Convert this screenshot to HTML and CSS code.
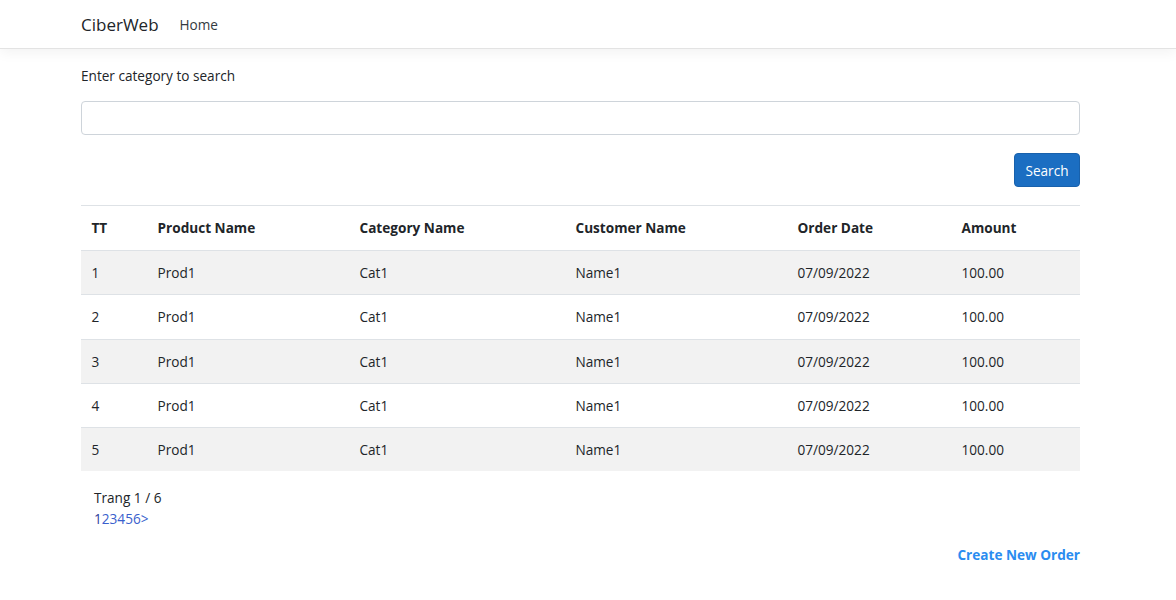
FILE: index.html
```html
<!DOCTYPE html>
<html lang="en">
<head>
<meta charset="utf-8">
<title>CiberWeb</title>
<link rel="stylesheet" href="styles.css">
</head>
<body>
<header class="navbar">
  <div class="container nav-inner">
    <a class="brand" href="#">CiberWeb</a>
    <a class="nav-link" href="#">Home</a>
  </div>
</header>
<main class="container main">
  <form class="search-form">
    <label class="label" for="cat">Enter category to search</label>
    <input class="input" id="cat" type="text">
    <div class="btn-row"><button class="btn" type="button">Search</button></div>
  </form>
  <table class="table">
    <colgroup>
      <col class="c1"><col class="c2"><col class="c3"><col class="c4"><col class="c5"><col class="c6">
    </colgroup>
    <thead>
      <tr><th>TT</th><th>Product Name</th><th>Category Name</th><th>Customer Name</th><th>Order Date</th><th>Amount</th></tr>
    </thead>
    <tbody>
      <tr class="odd"><td>1</td><td>Prod1</td><td>Cat1</td><td>Name1</td><td>07/09/2022</td><td>100.00</td></tr>
      <tr><td>2</td><td>Prod1</td><td>Cat1</td><td>Name1</td><td>07/09/2022</td><td>100.00</td></tr>
      <tr class="odd"><td>3</td><td>Prod1</td><td>Cat1</td><td>Name1</td><td>07/09/2022</td><td>100.00</td></tr>
      <tr><td>4</td><td>Prod1</td><td>Cat1</td><td>Name1</td><td>07/09/2022</td><td>100.00</td></tr>
      <tr class="odd"><td>5</td><td>Prod1</td><td>Cat1</td><td>Name1</td><td>07/09/2022</td><td>100.00</td></tr>
    </tbody>
  </table>
  <div class="pager">
    <div>Trang 1 / 6</div>
    <div class="pages"><a class="cur" href="#">1</a><a href="#">2</a><a href="#">3</a><a href="#">4</a><a href="#">5</a><a href="#">6</a><a href="#">&gt;</a></div>
  </div>
  <div class="create-row"><a class="create" href="#">Create New Order</a></div>
</main>
</body>
</html>
```
FILE: styles.css
```css
* { box-sizing: border-box; }
body {
  margin: 0;
  font-family: "Open Sans", "Noto Sans", sans-serif;
  font-size: 13.6px;
  line-height: 21px;
  color: #212529;
  background: #fff;
}
a { text-decoration: none; }
.container {
  width: 999px;
  margin-left: 81px;
}
.navbar {
  height: 49px;
  border-bottom: 1px solid #e3e3e3;
  box-shadow: 0 4px 12px rgba(0,0,0,0.05);
}
.nav-inner {
  display: flex;
  align-items: center;
  height: 48px;
}
.brand {
  font-size: 17px;
  color: #212529;
  margin-right: 14px;
}
.nav-link {
  color: #343a40;
  padding: 0 7px;
}
.main { padding-top: 16px; }
.search-form { display: flex; flex-direction: column; }
.label { display: block; margin-bottom: 15px; }
.input {
  height: 34px;
  border: 1px solid #ced4da;
  border-radius: 4px;
  font: inherit;
  padding: 6px 12px;
}
.btn-row { display: flex; justify-content: flex-end; margin-top: 18px; }
.btn {
  background: #1b6ec2;
  border: 1px solid #1861ac;
  color: #fff;
  border-radius: 4px;
  font: inherit;
  height: 34px;
  padding: 0 10.5px;
}
.table {
  width: 100%;
  margin-top: 18px;
  border-collapse: collapse;
  table-layout: fixed;
}
.c1 { width: 66px; }
.c2 { width: 202px; }
.c3 { width: 216px; }
.c4 { width: 222px; }
.c5 { width: 164px; }
.c6 { width: 129px; }
.table th, .table td {
  text-align: left;
  padding: 11px 10.5px 11.25px;
  border-top: 1px solid #dee2e6;
  vertical-align: top;
}
.table th { font-weight: 700; padding-bottom: 12px; }
.table tr.odd td { background: #f2f2f2; }
.pager { padding: 16px 13px 0; }
.pages a { color: #3a5fcd; }
.pages a.cur { color: #2d3d9a; }
.create-row { display: flex; justify-content: flex-end; margin-top: 15px; }
.create { color: #2a8cf0; font-weight: 700; }
```
